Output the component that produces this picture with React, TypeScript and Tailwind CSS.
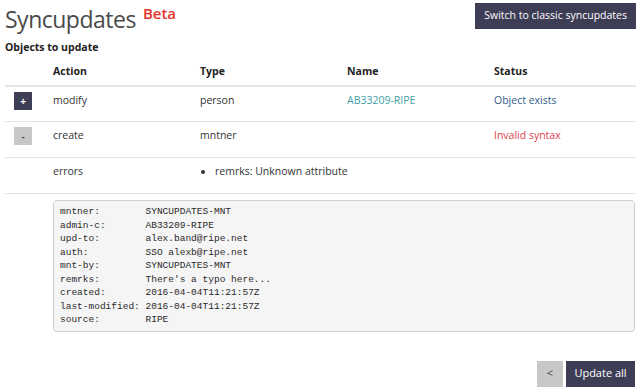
const rpsl: [string, string][] = [
  ['mntner:', 'SYNCUPDATES-MNT'],
  ['admin-c:', 'AB33209-RIPE'],
  ['upd-to:', 'alex.band@ripe.net'],
  ['auth:', 'SSO alexb@ripe.net'],
  ['mnt-by:', 'SYNCUPDATES-MNT'],
  ['remrks:', "There's a typo here..."],
  ['created:', '2016-04-04T11:21:57Z'],
  ['last-modified:', '2016-04-04T11:21:57Z'],
  ['source:', 'RIPE'],
]

const cols = 'grid grid-cols-[48px_147px_147px_147px_1fr]'

export default function App() {
  return (
    <div className="w-[640px] h-[392px] bg-white pl-[5px] pr-[4px] font-['Open_Sans',sans-serif] text-[#333] text-[10.5px] overflow-hidden">
      {/* Title bar */}
      <div className="flex justify-between items-start h-[38px]">
        <h1 className="flex items-start pt-[3px] text-[#4a4a4a] text-[23px] font-medium leading-[32px] tracking-[-0.5px]">
          Syncupdates
          <span className="ml-[7px] text-[#e2332b] text-[15px] font-semibold leading-[20px] tracking-normal">Beta</span>
        </h1>
        <button className="mt-[3px] h-[26px] px-[9px] bg-[#3e3d56] text-white text-[10.5px]">
          Switch to classic syncupdates
        </button>
      </div>

      <h2 className="h-[20px] font-bold text-[10.5px] leading-[18px] text-[#222]">Objects to update</h2>

      {/* Table */}
      <div className={`${cols} items-center h-[29px] border-b-2 border-[#e6e6e6] font-bold text-[#222]`}>
        <span />
        <span>Action</span>
        <span>Type</span>
        <span>Name</span>
        <span>Status</span>
      </div>
      <div className={`${cols} h-[35px] pt-[5px] leading-[17px] border-b border-[#e3e3e3]`}>
        <span className="pl-[9px]">
          <span className="flex w-[18px] h-[18px] items-center justify-center bg-[#3e3d56] text-white text-[10px] font-bold">+</span>
        </span>
        <span>modify</span>
        <span>person</span>
        <span className="text-[#3e9fa6]">AB33209-RIPE</span>
        <span className="text-[#2f5e8c]">Object exists</span>
      </div>
      <div className={`${cols} h-[36px] pt-[5px] leading-[17px] border-b border-[#e3e3e3]`}>
        <span className="pl-[9px]">
          <span className="flex w-[18px] h-[18px] items-center justify-center bg-[#c8c8c8] text-[#555] text-[10px] font-bold">-</span>
        </span>
        <span>create</span>
        <span>mntner</span>
        <span />
        <span className="text-[#e0404a]">Invalid syntax</span>
      </div>
      <div className={`${cols} h-[36px] pt-[5px] leading-[17px] border-b border-[#e3e3e3]`}>
        <span />
        <span>errors</span>
        <ul className="col-span-3 list-disc pl-[15px]">
          <li>remrks: Unknown attribute</li>
        </ul>
      </div>

      {/* Object text */}
      <pre className="mt-[6px] ml-[48px] mr-[1px] rounded-[4px] border border-[#cfcfcf] bg-[#f5f5f5] pl-[6px] pt-[4px] pb-[4px] font-['Liberation_Mono',monospace] text-[9.5px] leading-[13.5px] text-[#2a2a2a]">
        {rpsl.map(([k, v]) => (
          <div key={k}>
            {k.padEnd(15, ' ')}
            {v}
          </div>
        ))}
      </pre>

      {/* Footer buttons */}
      <div className="mt-[29px] flex justify-end gap-[3px] pr-[1px]">
        <button className="h-[26px] w-[26px] bg-[#c8c8c8] text-[#444] text-[11px]">&lt;</button>
        <button className="h-[26px] w-[69px] bg-[#3e3d56] text-white text-[11px]">Update all</button>
      </div>
    </div>
  )
}
